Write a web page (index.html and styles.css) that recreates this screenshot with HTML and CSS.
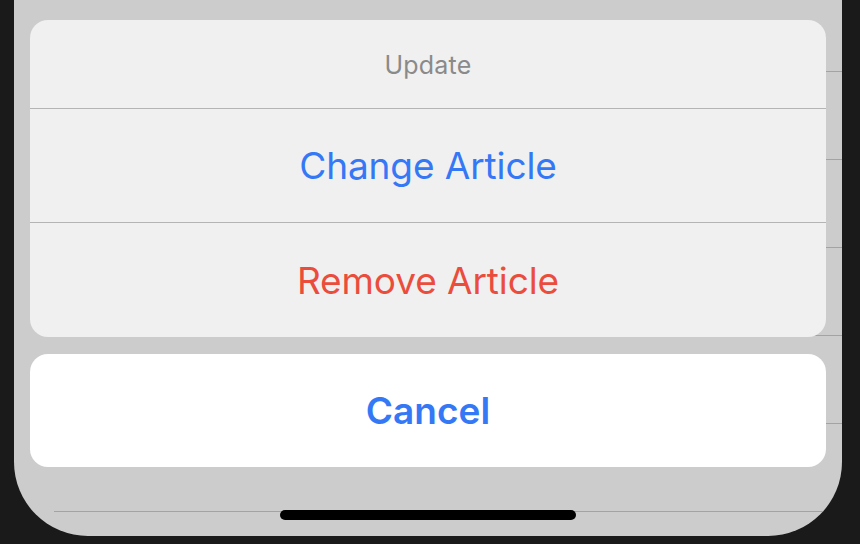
FILE: index.html
```html
<!DOCTYPE html>
<html lang="en">
<head>
<meta charset="utf-8">
<title>Action Sheet</title>
<link rel="stylesheet" href="styles.css">
</head>
<body>
<div class="screen">
  <ul class="list">
    <li class="row first"></li>
    <li class="row"></li>
    <li class="row"></li>
    <li class="row"></li>
    <li class="row"></li>
    <li class="row"></li>
  </ul>
  <div class="sheet">
    <div class="group">
      <div class="title">Update</div>
      <button class="action">Change Article</button>
      <button class="action destructive">Remove Article</button>
    </div>
    <button class="cancel">Cancel</button>
  </div>
  <div class="home-indicator"></div>
</div>
</body>
</html>
```
FILE: styles.css
```css
html, body {
  margin: 0;
  padding: 0;
  background: #1a1a1a;
  width: 860px;
  height: 544px;
  overflow: hidden;
  font-family: "Inter", "Noto Sans", "Liberation Sans", sans-serif;
}
.screen {
  position: relative;
  margin-left: 14px;
  width: 828px;
  height: 536px;
  background: #cccccc;
  border-radius: 0 0 74px 74px;
  overflow: hidden;
}
.list {
  list-style: none;
  margin: 0;
  padding: 0;
}
.row {
  height: 87px;
  margin-left: 40px;
  border-bottom: 1px solid #a3a3a3;
}
.row.first {
  height: 71px;
}
.sheet {
  position: absolute;
  left: 16px;
  right: 16px;
  top: 20px;
  display: flex;
  flex-direction: column;
  gap: 17px;
}
.group {
  background: #f0f0f0;
  border-radius: 18px;
  overflow: hidden;
  display: flex;
  flex-direction: column;
}
.title {
  height: 88px;
  display: flex;
  align-items: center;
  justify-content: center;
  color: #8a8a8a;
  font-size: 25px;
  letter-spacing: 0.2px;
  padding-top: 2px;
  box-sizing: border-box;
}
.action, .cancel {
  border: 0;
  margin: 0;
  padding: 0;
  font-family: inherit;
  background: transparent;
  display: flex;
  align-items: center;
  justify-content: center;
  width: 100%;
  box-sizing: border-box;
}
.action {
  height: 114px;
  border-top: 1px solid #b4b4b4;
  color: #3478f6;
  font-size: 37px;
  letter-spacing: -0.1px;
}
.action.destructive {
  height: 115px;
  color: #eb4d3d;
}
.cancel {
  height: 113px;
  background: #ffffff;
  border-radius: 18px;
  color: #3478f6;
  font-size: 37px;
  font-weight: 600;
}
.home-indicator {
  position: absolute;
  left: 266px;
  top: 510px;
  width: 296px;
  height: 10px;
  background: #000;
  border-radius: 5px;
}
```
